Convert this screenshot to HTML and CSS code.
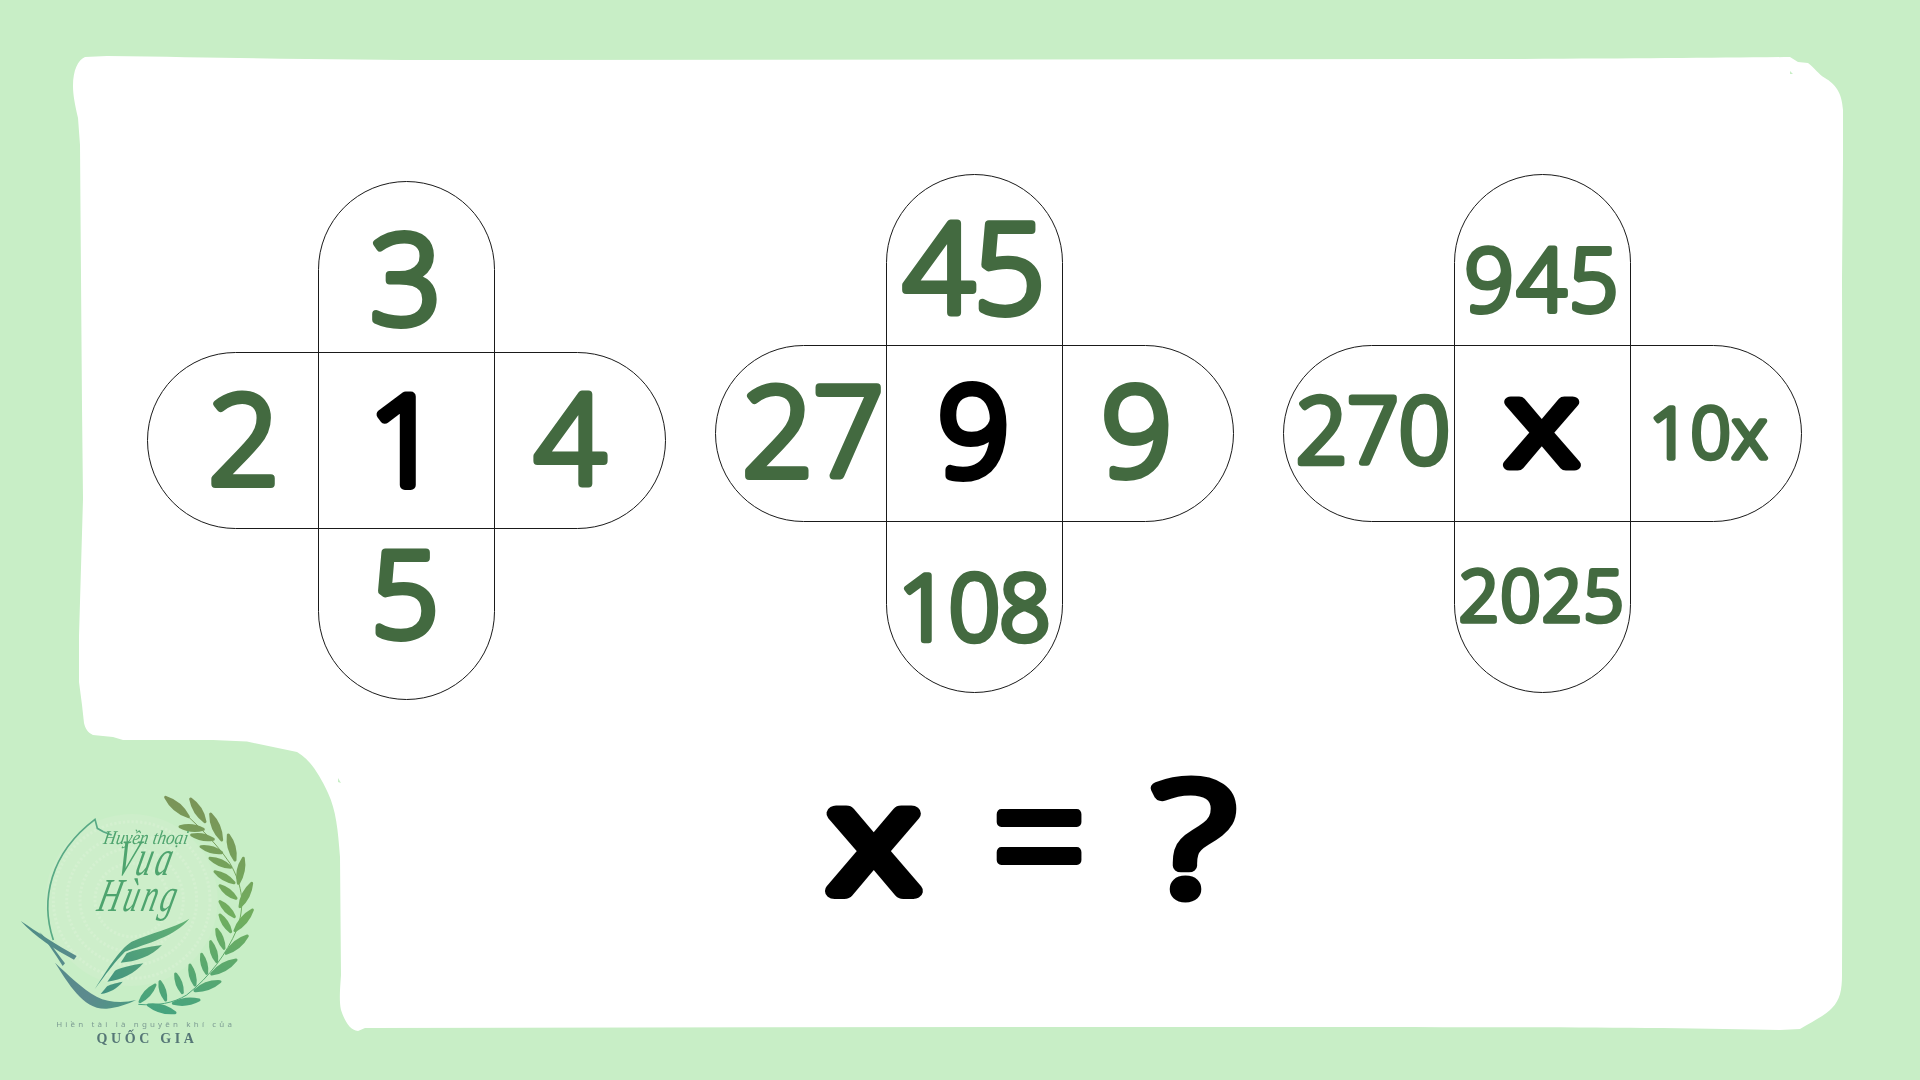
FILE: index.html
```html
<!DOCTYPE html>
<html lang="vi">
<head>
<meta charset="utf-8">
<title>x = ?</title>
<link rel="stylesheet" href="styles.css">
</head>
<body>
<div class="stage">
  <svg class="sheet" viewBox="0 0 1920 1080" aria-hidden="true">
    <path class="sheet-shape" d="M107 56 C250 58 350 60 450 60 L1440 59 C1600 59 1700 58 1790 57 L1798 62 L1808 63 C1815 68 1818 74 1825 78 C1835 84 1842 92 1843 110 L1843 160 L1842 280 L1843 700 L1842 975 C1842 990 1840 1000 1832 1008 C1826 1015 1815 1020 1800 1029 L1780 1030 C1600 1026 1300 1027 1000 1027 L365 1028 L358 1031 C350 1030 345 1022 341 1010 C339 1000 340 990 341 975 L340 857 C338 830 336 810 328 793 C322 780 316 770 310 763 C305 757 300 754 297 752 L247 741.5 L213 740 L123 740 L113 737 L93 735 C88 733 85 728 84 723 L82 705 L79 682 L79 636 L83 499 L82 407 L80 145 L78 118 C75 105 73 95 73 86 C73 70 78 60 85 57 Z"/>
    <path class="sheet-speck" d="M338 778 L341 783 L338 782 Z M1790 71 L1793 74 L1790 74 Z"/>
  </svg>

  <section class="puzzles">
    <div class="cross cross-low">
      <div class="pill pill-v"></div>
      <div class="pill pill-h"></div>
      <svg class="cell top"><text class="num xl" x="88" y="143">3</text></svg>
      <svg class="cell left"><text class="num xl" x="97" y="132">2</text></svg>
      <svg class="cell mid"><text class="num xl key" x="87" y="133">1</text></svg>
      <svg class="cell right"><text class="num xl" x="75" y="132">4</text></svg>
      <svg class="cell bottom"><text class="num l" x="87" y="108">5</text></svg>
    </div>
    <div class="cross">
      <div class="pill pill-v"></div>
      <div class="pill pill-h"></div>
      <svg class="cell top"><text class="num xl" x="88" y="139">45</text></svg>
      <svg class="cell left"><text class="num xl" x="98" y="131">27</text></svg>
      <svg class="cell mid"><text class="num xl key" x="88" y="131">9</text></svg>
      <svg class="cell right"><text class="num xl" x="74" y="131">9</text></svg>
      <svg class="cell bottom"><text class="num m snug" x="88" y="118">108</text></svg>
    </div>
    <div class="cross">
      <div class="pill pill-v"></div>
      <div class="pill pill-h"></div>
      <svg class="cell top"><text class="num s wide" x="89" y="137">945</text></svg>
      <svg class="cell left"><text class="num m" x="90" y="118">270</text></svg>
      <svg class="cell mid"><text class="num x-key" transform="translate(88 120) scale(1.22 1)">x</text></svg>
      <svg class="cell right"><text class="num xs roomy" x="78" y="113">10x</text></svg>
      <svg class="cell bottom"><text class="num xs roomy" x="88" y="99">2025</text></svg>
    </div>
  </section>

  <section class="footer-row">
    <svg class="logo" viewBox="20 790 260 270">
      <defs>
        <linearGradient id="leafGrad" gradientUnits="userSpaceOnUse" x1="620" y1="230" x2="480" y2="880">
          <stop offset="0" stop-color="#7b9257"/>
          <stop offset="0.5" stop-color="#70ae5e"/>
          <stop offset="1" stop-color="#45a37f"/>
        </linearGradient>
        <linearGradient id="featherGrad" gradientUnits="userSpaceOnUse" x1="560" y1="600" x2="290" y2="810">
          <stop offset="0" stop-color="#63b275"/>
          <stop offset="1" stop-color="#3f9080"/>
        </linearGradient>
        <linearGradient id="birdGrad" gradientUnits="userSpaceOnUse" x1="70" y1="600" x2="400" y2="860">
          <stop offset="0" stop-color="#4e8c86"/>
          <stop offset="0.7" stop-color="#5c8a8e"/>
          <stop offset="1" stop-color="#4c9a82"/>
        </linearGradient>
      </defs>
      <g transform="translate(0 720) scale(0.33333)">
        <circle class="m-disc" cx="395" cy="540" r="258"/>
        <circle class="m-ring" cx="395" cy="540" r="235"/>
        <circle class="m-ring" cx="395" cy="540" r="195"/>
        <circle class="m-ring" cx="395" cy="540" r="155"/>
        <circle class="m-ring" cx="395" cy="540" r="110"/>
        <path class="arc" d="M160 660 C120 540 150 400 285 298 L292 325 L310 335 L335 345"/>
        <path class="bird" d="M62 603 C110 635 170 675 230 708 L222 719 C165 690 105 650 62 603 Z"/>
        <path class="bird" d="M118 636 C140 655 165 690 195 730 L188 738 C165 700 140 665 118 636 Z"/>
        <path class="bird" d="M165 728 C205 790 250 870 320 866 C350 864 385 852 408 840 C370 850 325 848 290 830 C245 805 205 765 165 728 Z"/>
        <path class="feather" d="M568 596 C520 625 450 640 395 665 C355 690 315 760 284 808 C315 765 345 725 375 695 C440 670 525 650 568 596 Z"/>
        <path class="feather" d="M486 675 C445 680 400 690 380 700 L362 728 C405 725 455 710 486 675 Z"/>
        <path class="feather" d="M430 730 C395 735 355 745 345 752 L322 785 C365 780 405 760 430 730 Z"/>
        <path class="feather" d="M368 785 C345 790 325 795 320 800 L302 822 C330 818 352 805 368 785 Z"/>
        <path class="stem" d="M500 232 C560 285 640 355 690 430 C730 500 735 560 710 630 C680 700 630 770 560 825 C520 850 470 858 415 853"/>
        <g class="leaves">
          <path d="M497 232 Q519 275 565 290 Q543 247 497 232Z"/>
          <path d="M572 237 Q580 280 615 305 Q608 262 572 237Z"/>
          <path d="M632 282 Q632 328 665 360 Q664 314 632 282Z"/>
          <path d="M685 345 Q680 386 705 420 Q710 378 685 345Z"/>
          <path d="M730 415 Q707 449 715 490 Q737 455 730 415Z"/>
          <path d="M755 490 Q723 518 720 560 Q751 532 755 490Z"/>
          <path d="M757 570 Q719 591 705 632 Q743 611 757 570Z"/>
          <path d="M742 648 Q700 661 678 700 Q720 687 742 648Z"/>
          <path d="M708 720 Q663 726 635 762 Q679 756 708 720Z"/>
          <path d="M660 785 Q617 783 585 812 Q627 813 660 785Z"/>
          <path d="M597 840 Q556 830 520 850 Q560 860 597 840Z"/>
          <path d="M525 878 Q490 850 445 855 Q480 882 525 878Z"/>
          <path d="M540 320 Q573 338 610 328 Q577 310 540 320Z"/>
          <path d="M575 345 Q604 364 640 358 Q610 338 575 345Z"/>
          <path d="M603 380 Q630 401 665 398 Q638 377 603 380Z"/>
          <path d="M630 415 Q656 440 692 442 Q666 416 630 415Z"/>
          <path d="M645 455 Q666 482 702 488 Q680 460 645 455Z"/>
          <path d="M660 497 Q676 526 708 535 Q692 506 660 497Z"/>
          <path d="M660 545 Q672 576 703 590 Q690 558 660 545Z"/>
          <path d="M660 585 Q666 616 692 635 Q686 604 660 585Z"/>
          <path d="M650 628 Q650 660 672 685 Q672 652 650 628Z"/>
          <path d="M632 665 Q629 699 650 725 Q653 691 632 665Z"/>
          <path d="M605 703 Q601 734 620 760 Q623 728 605 703Z"/>
          <path d="M570 735 Q565 768 585 795 Q589 762 570 735Z"/>
          <path d="M527 762 Q526 794 547 818 Q548 786 527 762Z"/>
          <path d="M480 785 Q477 815 497 840 Q499 809 480 785Z"/>
          <path d="M465 795 Q432 811 420 845 Q452 829 465 795Z"/>
        </g>
        <text class="l-title" transform="translate(435 372) skewX(-10) scale(0.92 1.05)">Huyền thoại</text>
        <text class="l-name" transform="translate(428 466) skewX(-14) scale(0.8 1.3)">Vua</text>
        <text class="l-name" transform="translate(408 572) skewX(-14) scale(0.78 1.2)">Hùng</text>
        <text class="l-motto" x="437" y="920">Hiền tài là nguyên khí của</text>
        <text class="l-nation" x="441" y="968">QUỐC GIA</text>
      </g>
    </svg>
    <svg class="equation" viewBox="800 700 460 300">
      <text class="eq eq-x" transform="translate(874 891) scale(1.2 1)">x</text>
      <text class="eq eq-eq" transform="translate(1039 903) scale(1 1.13)">=</text>
      <text class="eq eq-q" transform="translate(1194 894) scale(1.25 1)">?</text>
    </svg>
  </section>
</div>
</body>
</html>
```

FILE: styles.css
```css
* { box-sizing: border-box; }

html, body {
  margin: 0;
  padding: 0;
  background: #c8eec6;
}

.stage {
  position: relative;
  width: 1920px;
  height: 1080px;
  overflow: hidden;
  font-family: "Open Sans", "Noto Sans", sans-serif;
}

.sheet {
  position: absolute;
  inset: 0;
  width: 1920px;
  height: 1080px;
}
.sheet-shape { fill: #fff; }
.sheet-speck { fill: #c8eec6; }

.puzzles {
  position: relative;
  display: flex;
  align-items: flex-start;
  gap: 49px;
  padding: 174px 0 0 147px;
  height: 700px;
}

.cross {
  display: grid;
  grid-template-columns: 171px 177px 171px;
  grid-template-rows: 171px 177px 171px;
}
.cross-low { margin-top: 7px; }

.pill {
  border: 1px solid #1a1a1a;
  border-radius: 89px;
}
.pill-v { grid-column: 2; grid-row: 1 / 4; }
.pill-h { grid-column: 1 / 4; grid-row: 2; }

.cell {
  display: block;
  width: 100%;
  height: 100%;
  overflow: visible;
}
.top { grid-column: 2; grid-row: 1; }
.left { grid-column: 1; grid-row: 2; }
.mid { grid-column: 2; grid-row: 2; }
.right { grid-column: 3; grid-row: 2; }
.bottom { grid-column: 2; grid-row: 3; }

.num {
  fill: #436a40;
  stroke: #436a40;
  stroke-linejoin: round;
  stroke-linecap: round;
  text-anchor: middle;
  font-family: "Open Sans", sans-serif;
  font-weight: 300;
}
.xl { font-size: 124px; stroke-width: 8px; }
.l { font-size: 118px; stroke-width: 8px; }
.m { font-size: 90px; stroke-width: 6.5px; }
.s { font-size: 86px; stroke-width: 6px; }
.xs { font-size: 70px; stroke-width: 5.5px; }
.snug { letter-spacing: -1px; }
.wide { letter-spacing: 3px; }
.roomy { letter-spacing: 1.5px; }
.key { fill: #000; stroke: #000; stroke-width: 10px; }
.x-key {
  fill: #000;
  stroke: #000;
  stroke-width: 11px;
  font-size: 118px;
}

.footer-row {
  position: relative;
  display: flex;
  align-items: flex-start;
  height: 380px;
  padding-left: 20px;
}

.logo {
  display: block;
  width: 260px;
  height: 270px;
  margin-top: 90px;
  filter: blur(0.4px);
}

.equation {
  display: block;
  width: 460px;
  height: 300px;
  margin-left: 520px;
  overflow: visible;
}

.eq {
  fill: #000;
  stroke: #000;
  stroke-linejoin: round;
  stroke-linecap: round;
  text-anchor: middle;
  font-family: "Open Sans", sans-serif;
  font-weight: 300;
}
.eq-x { font-size: 146px; stroke-width: 16px; }
.eq-eq { font-size: 165px; stroke-width: 9px; }
.eq-q { font-size: 155px; stroke-width: 13px; }

.m-disc { fill: #cdeeca; }
.m-ring { fill: none; stroke: #d4f0d0; stroke-width: 9; stroke-dasharray: 7 6; }
.arc { fill: none; stroke: #58a985; stroke-width: 5; }
.bird { fill: url(#birdGrad); }
.feather { fill: url(#featherGrad); }
.stem { fill: none; stroke: url(#leafGrad); stroke-width: 3; }
.leaves path {
  fill: url(#leafGrad);
  stroke: url(#leafGrad);
  stroke-width: 9;
  stroke-linejoin: round;
}

.l-title, .l-name {
  fill: #4ea46e;
  text-anchor: middle;
  font-family: "Liberation Serif", serif;
  font-style: italic;
}
.l-title { font-size: 56px; }
.l-name { font-size: 118px; letter-spacing: 12px; }
.l-motto {
  fill: #7d9c93;
  text-anchor: middle;
  font-family: "Noto Sans", sans-serif;
  font-size: 24px;
  letter-spacing: 9.5px;
}
.l-nation {
  fill: #557676;
  text-anchor: middle;
  font-family: "Liberation Serif", serif;
  font-weight: 700;
  font-size: 42px;
  letter-spacing: 11px;
}
```
